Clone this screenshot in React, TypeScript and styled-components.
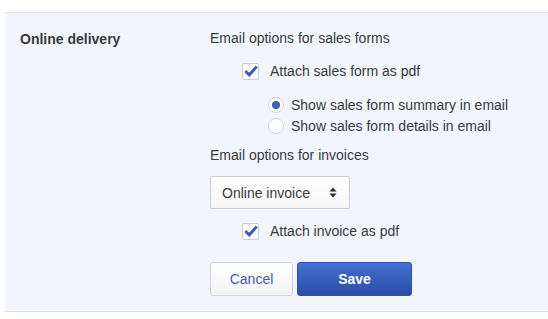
import React from "react";
import styled, { createGlobalStyle } from "styled-components";

const Global = createGlobalStyle`
  html, body { margin: 0; padding: 0; background: #ffffff; }
  body {
    font-family: "Liberation Sans", Arial, Helvetica, sans-serif;
    font-size: 14px;
    color: #393a3d;
    -webkit-font-smoothing: antialiased;
  }
`;

const Page = styled.div`
  padding-top: 12px;
  padding-left: 5px;
  width: 543px;
`;

const Panel = styled.section`
  display: flex;
  background: #f2f6fc;
  border-top: 1px solid #dcdfe3;
  border-bottom: 1px solid #dcdfe3;
  padding: 15px 0 15px 15px;
  height: 268px;
  box-sizing: content-box;
`;

const Label = styled.div`
  width: 190px;
  font-weight: 700;
  line-height: 22px;
  color: #393a3d;
`;

const Content = styled.div`
  display: flex;
  flex-direction: column;
  align-items: flex-start;
`;

const Heading = styled.div<{ $mt?: number }>`
  line-height: 20px;
  margin-top: ${(p) => p.$mt ?? 0}px;
`;

const CheckRow = styled.label<{ $mt: number }>`
  display: flex;
  align-items: center;
  gap: 11px;
  margin-top: ${(p) => p.$mt}px;
  margin-left: 32px;
  height: 18px;
  line-height: 18px;
`;

const Box = styled.span`
  width: 17px;
  height: 17px;
  box-sizing: border-box;
  border: 1px solid #c9ccd1;
  border-radius: 2px;
  background: #ffffff;
  display: flex;
  align-items: center;
  justify-content: center;
`;

const RadioGroup = styled.div`
  display: flex;
  flex-direction: column;
  margin-top: 14px;
  margin-left: 58px;
`;

const RadioRow = styled.label`
  display: flex;
  align-items: center;
  gap: 7px;
  height: 21px;
`;

const RadioCircle = styled.span<{ $on?: boolean }>`
  width: 16px;
  height: 16px;
  box-sizing: border-box;
  border-radius: 50%;
  border: 1px solid #cfd2d6;
  background: #ffffff;
  display: flex;
  align-items: center;
  justify-content: center;
  &::after {
    content: "";
    width: 8px;
    height: 8px;
    border-radius: 50%;
    background: ${(p) => (p.$on ? "#3d5fb5" : "transparent")};
  }
`;

const Select = styled.div`
  margin-top: 11px;
  width: 140px;
  height: 34px;
  box-sizing: border-box;
  border: 1px solid #c9ccd1;
  border-radius: 2px;
  background: linear-gradient(#ffffff, #f6f6f6);
  display: flex;
  align-items: center;
  justify-content: space-between;
  padding: 0 12px 0 11px;
`;

const Buttons = styled.div`
  display: flex;
  gap: 4px;
  margin-top: 22px;
`;

const Button = styled.button<{ $primary?: boolean }>`
  height: 34px;
  box-sizing: border-box;
  border-radius: 3px;
  font-family: inherit;
  font-size: 14px;
  cursor: pointer;
  padding: 0;
  width: ${(p) => (p.$primary ? 115 : 83)}px;
  border: 1px solid ${(p) => (p.$primary ? "#2d50ad" : "#cfd2d6")};
  background: ${(p) =>
    p.$primary
      ? "linear-gradient(#4170d2, #2b4daa)"
      : "linear-gradient(#ffffff, #f3f3f3)"};
  color: ${(p) => (p.$primary ? "#ffffff" : "#3b5fbe")};
  font-weight: ${(p) => (p.$primary ? 700 : 400)};
`;

const Check = () => (
  <svg width="14" height="12" viewBox="0 0 14 12">
    <path d="M1.3 6 L5.2 9.8 L12.8 1.6" fill="none" stroke="#3a5db8" strokeWidth="3" strokeLinecap="butt" strokeLinejoin="miter" />
  </svg>
);

const Arrows = () => (
  <svg width="8" height="11" viewBox="0 0 8 11">
    <path d="M0.5 4.5 L4 0.5 L7.5 4.5 Z" fill="#1f2d48" />
    <path d="M0.5 6.5 L4 10.5 L7.5 6.5 Z" fill="#1f2d48" />
  </svg>
);

export default function App() {
  return (
    <>
      <Global />
      <Page>
        <Panel>
          <Label>Online delivery</Label>
          <Content>
            <Heading>Email options for sales forms</Heading>
            <CheckRow $mt={14}>
              <Box>
                <Check />
              </Box>
              Attach sales form as pdf
            </CheckRow>
            <RadioGroup>
              <RadioRow>
                <RadioCircle $on />
                Show sales form summary in email
              </RadioRow>
              <RadioRow>
                <RadioCircle />
                Show sales form details in email
              </RadioRow>
            </RadioGroup>
            <Heading $mt={9}>Email options for invoices</Heading>
            <Select>
              <span>Online invoice</span>
              <Arrows />
            </Select>
            <CheckRow $mt={13}>
              <Box>
                <Check />
              </Box>
              Attach invoice as pdf
            </CheckRow>
            <Buttons>
              <Button>Cancel</Button>
              <Button $primary>Save</Button>
            </Buttons>
          </Content>
        </Panel>
      </Page>
    </>
  );
}
